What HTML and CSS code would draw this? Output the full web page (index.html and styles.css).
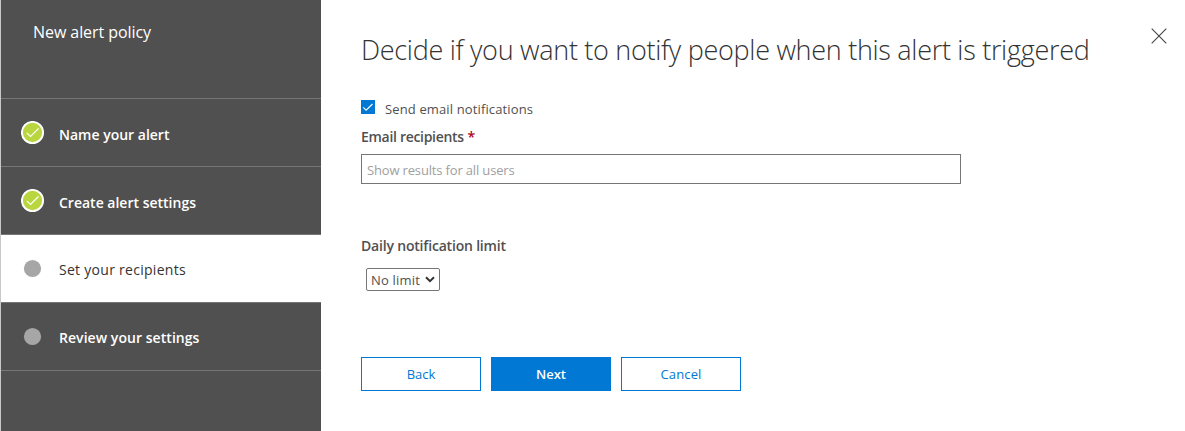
FILE: index.html
```html
<!DOCTYPE html>
<html lang="en">
<head>
<meta charset="utf-8">
<title>New alert policy</title>
<link rel="stylesheet" href="styles.css">
</head>
<body>
<div class="wizard">
  <nav class="sidebar">
    <header class="sidebar-header"><span class="t-policy">New alert policy</span></header>
    <div class="step">
      <svg class="step-icon" viewBox="0 0 24 24"><circle cx="11.5" cy="11.5" r="10.6" fill="#bad63e" stroke="#fff" stroke-width="1.9"/><path d="M5.8 11.8l3.7 3.7 8-8" fill="none" stroke="#fff" stroke-width="1.2"/></svg>
      <span class="step-label t-name">Name your alert</span>
    </div>
    <div class="step">
      <svg class="step-icon" viewBox="0 0 24 24"><circle cx="11.5" cy="11.5" r="10.6" fill="#bad63e" stroke="#fff" stroke-width="1.9"/><path d="M5.8 11.8l3.7 3.7 8-8" fill="none" stroke="#fff" stroke-width="1.2"/></svg>
      <span class="step-label t-create">Create alert settings</span>
    </div>
    <div class="step active">
      <svg class="step-icon" viewBox="0 0 24 24"><circle cx="11.5" cy="11.5" r="8.6" fill="#a6a6a6"/></svg>
      <span class="step-label t-set">Set your recipients</span>
    </div>
    <div class="step">
      <svg class="step-icon" viewBox="0 0 24 24"><circle cx="11.5" cy="11.5" r="8.6" fill="#a6a6a6"/></svg>
      <span class="step-label t-review">Review your settings</span>
    </div>
  </nav>
  <main class="content">
    <div class="heading-row">
      <h1 class="title">Decide if you want to notify people when this alert is triggered</h1>
      <button class="close" aria-label="Close"><svg width="16" height="16" viewBox="0 0 16 16"><path d="M.7.7l14.6 14.6M15.3.7L.7 15.3" fill="none" stroke="#444" stroke-width="1.1"/></svg></button>
    </div>
    <div class="check-row">
      <svg class="checkbox" width="14" height="14" viewBox="0 0 14 14"><path fill="#0078d4" d="M0 0h14v14H0z"/><path d="M2.3 7.3l2.8 2.9 6.4-6.2" fill="none" stroke="#fff" stroke-width="1.1"/></svg>
      <span class="t-send">Send email notifications</span>
    </div>
    <div class="label"><span class="t-email">Email recipients</span> <span class="required">*</span></div>
    <div class="input"><span class="t-show">Show results for all users</span></div>
    <div class="label limit-label"><span class="t-daily">Daily notification limit</span></div>
    <div class="select"><span class="t-limit">No limit</span><svg width="10" height="7" viewBox="0 0 10 7"><path d="M1 1.2l4 3.9 4-3.9" fill="none" stroke="#333" stroke-width="2"/></svg></div>
    <div class="actions">
      <button class="btn"><span>Back</span></button>
      <button class="btn primary"><span>Next</span></button>
      <button class="btn"><span class="t-cancel">Cancel</span></button>
    </div>
  </main>
</div>
</body>
</html>
```
FILE: styles.css
```css
* { box-sizing: border-box; }
body {
  margin: 0;
  overflow: hidden;
  background: #fff;
  color: #505050;
  font-family: "Open Sans", "Noto Sans", sans-serif;
  font-size: 13px;
}
span { white-space: nowrap; }
button { font-family: inherit; cursor: pointer; }
svg { flex: none; display: block; }
.wizard { display: flex; height: 431px; border-left: 1px solid #c8c8c8; }
.sidebar { width: 320px; flex: none; background: #505050; color: #fff; }
.sidebar-header {
  height: 99px;
  padding: 20px 32px 0;
  border-bottom: 1px solid #767676;
  font-size: 16px;
  line-height: 24px;
}
.step {
  display: flex;
  align-items: flex-start;
  gap: 14px;
  height: 68px;
  padding: 22px 0 0 20px;
  border-bottom: 1px solid #767676;
}
.step-icon { width: 24px; height: 24px; }
.step-label { font-size: 14px; font-weight: 600; line-height: 27px; }
.active { background: #fff; color: #333; }
.active .step-label { font-weight: 500; line-height: 26px; }
.step .t-review { line-height: 25px; }
.content { flex: 1; padding: 28px 18px 0 40px; }
.heading-row { display: flex; justify-content: space-between; height: 72px; }
.title {
  margin: 0;
  color: #333;
  font-size: 27px;
  font-weight: 300;
  line-height: 44px;
  letter-spacing: -0.295px;
  white-space: nowrap;
}
.close { height: 16px; padding: 0; border: 0; background: none; }
.check-row { display: flex; gap: 10px; height: 27px; line-height: 18px; }
.label { font-size: 14px; font-weight: 600; line-height: 20px; height: 27px; }
.required { color: #b0051e; }
.input {
  width: 600px;
  height: 30px;
  padding: 0 5px;
  border: 1px solid #767676;
  color: #a0a0a0;
  line-height: 30px;
}
.limit-label { margin-top: 52px; height: 32px; }
.select {
  display: flex;
  align-items: center;
  justify-content: space-between;
  width: 74px;
  height: 23px;
  margin-left: 5px;
  padding: 0 4px;
  border: 1px solid #767676;
  border-radius: 2px;
}
.actions { display: flex; gap: 10px; margin-top: 66px; }
.btn {
  width: 120px;
  height: 34px;
  padding: 0;
  border: 1px solid #0078d4;
  background: #fff;
  color: #0078d4;
  font-size: 13px;
}
.primary { background: #0078d4; color: #fff; font-weight: 600; }

/* Per-string tracking */
.t-policy { letter-spacing: -0.07px; }
.t-set { letter-spacing: 0.28px; }
.t-review { letter-spacing: 0.05px; }
.t-send { letter-spacing: 0.13px; }
.t-email { letter-spacing: -0.3px; }
.t-show { letter-spacing: -0.16px; }
.t-daily { letter-spacing: -0.19px; }
.t-limit { letter-spacing: 0.2px; }
.t-cancel { letter-spacing: 0.15px; }
```
